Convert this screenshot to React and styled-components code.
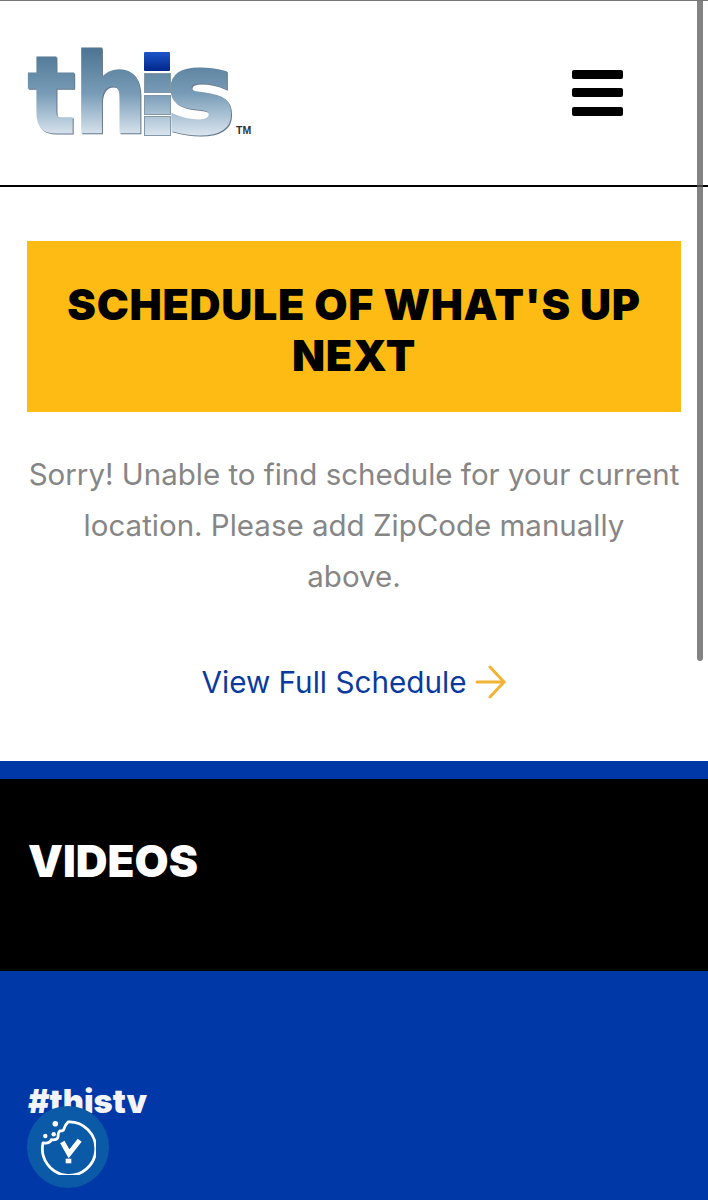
import React from "react";
import styled, { createGlobalStyle } from "styled-components";

const Global = createGlobalStyle`
  html, body { margin: 0; padding: 0; background: #fff; overflow: hidden; }
  * { box-sizing: border-box; }
`;

const Page = styled.div`
  position: relative;
  width: 708px;
  height: 1200px;
  overflow: hidden;
  font-family: Inter, "Liberation Sans", Arial, sans-serif;
  border-top: 1px solid #777;
`;

const Header = styled.header`
  height: 186px;
  border-bottom: 2px solid #000;
  padding: 0 85px 0 27px;
  display: flex;
  align-items: center;
  justify-content: space-between;
`;

const Logo = styled.svg`
  width: 228px;
  height: 90px;
  margin-top: 2px;
  display: block;
  overflow: visible;
`;

const LogoLetters = styled.g`
  filter: drop-shadow(1.5px 1px 0 #66788a);
`;

const Burger = styled.button`
  width: 51px;
  height: 46px;
  padding: 0;
  border: 0;
  background: none;
  display: flex;
  flex-direction: column;
  justify-content: space-between;
  margin-bottom: 1px;
`;

const BurgerBar = styled.span`
  display: block;
  height: 9px;
  border-radius: 2px;
  background: #000;
`;

const Schedule = styled.section`
  padding: 54px 27px 0;
  height: 574px;
  text-align: center;
`;

const Banner = styled.h1`
  margin: 0;
  height: 171px;
  padding-top: 38px;
  background: #fdbb14;
  color: #000;
  font-weight: 900;
  font-size: 43px;
  line-height: 51px;
  letter-spacing: 0.7px;
`;

const Message = styled.p`
  margin: 37px -2px 0;
  color: #868686;
  font-size: 29.5px;
  line-height: 51px;
`;

const FullLink = styled.a`
  margin-top: 62px;
  display: inline-flex;
  align-items: center;
  gap: 8px;
  color: #0a3a9e;
  font-size: 29.7px;
  line-height: 36px;
`;

const BlueBand = styled.div`
  height: 18px;
  background: #0038a8;
`;

const VideosBar = styled.section`
  height: 192px;
  background: #000;
  padding: 54px 28px 0;
`;

const SectionTitle = styled.h2`
  margin: 0;
  color: #fff;
  font-weight: 900;
  font-size: 44px;
  line-height: 56px;
`;

const TagSection = styled.section`
  height: 240px;
  background: #0038a8;
  padding: 108px 28px 0;
`;

const Hashtag = styled.h3`
  margin: 0;
  color: #f2f4f8;
  font-weight: 900;
  font-size: 32.6px;
  line-height: 44px;
`;

const CookieButton = styled.div`
  position: absolute;
  left: 27px;
  top: 1105px;
  width: 82px;
  height: 82px;
  border-radius: 50%;
  background: #0a5aa8;
  display: flex;
  align-items: center;
  justify-content: center;
`;

const Scrollbar = styled.div`
  position: absolute;
  left: 697px;
  top: 0;
  width: 6px;
  height: 660px;
  border-radius: 0 0 3px 3px;
  background: rgba(90, 90, 90, 0.75);
`;

const LogoMark = () => (
  <Logo viewBox="0 0 228 90" aria-label="this">
    <defs>
      <linearGradient id="steel" gradientUnits="userSpaceOnUse" x1="0" y1="2" x2="0" y2="87">
        <stop offset="0" stopColor="#4f7795" />
        <stop offset="0.5" stopColor="#789cb7" />
        <stop offset="1" stopColor="#dbe6ef" />
      </linearGradient>
      <linearGradient id="cap" x1="0" y1="0" x2="0" y2="1">
        <stop offset="0" stopColor="#1d56c8" />
        <stop offset="1" stopColor="#00268a" />
      </linearGradient>
    </defs>
    <LogoLetters fill="url(#steel)" stroke="url(#steel)" strokeWidth="3" fontFamily="DejaVu Sans" fontWeight="700">
      <text x="1" y="83" fontSize="105" textLength="47" lengthAdjust="spacingAndGlyphs">t</text>
      <text x="47" y="83" fontSize="108" textLength="73" lengthAdjust="spacingAndGlyphs">h</text>
      <text x="139" y="83" fontSize="112" textLength="69" lengthAdjust="spacingAndGlyphs">s</text>
    </LogoLetters>
    <g fill="url(#steel)" stroke="#8397a7" strokeWidth="1">
      <rect x="117.5" y="24.5" width="26" height="19" />
      <rect x="117.5" y="46.5" width="26" height="19" />
      <rect x="117.5" y="67.5" width="26" height="19" />
    </g>
    <rect x="117" y="3" width="26" height="19" rx="1" fill="url(#cap)" />
    <text x="209" y="85" fontFamily="Liberation Sans" fontWeight="700" fontSize="10.5" fill="#333">TM</text>
  </Logo>
);

const Arrow = () => (
  <svg width="32" height="34" viewBox="0 0 32 34" fill="none" stroke="#f2b233" strokeWidth="3" strokeLinecap="round" strokeLinejoin="round">
    <path d="M2 17H29" />
    <path d="M15 2L29 17L15 32" />
  </svg>
);

const CookieIcon = () => (
  <svg width="56" height="56" viewBox="0 -2 56 56" fill="none" stroke="#fff" strokeWidth="2.8" strokeLinecap="round" strokeLinejoin="round">
    <path d="M28 1A26.7 26.7 0 1 1 3 22C7 22.5 10.5 21.5 11.3 18.7C14.5 19 17.5 18.5 18 16C18 13.5 18.5 11 19.7 10C22 10 24 9.5 24 7.7C25 5 26 3 28 1Z" />
    <path d="M22.3 21L29 32.7L39.7 19.3" strokeWidth="5" strokeLinecap="butt" strokeLinejoin="miter" />
    <rect x="25.7" y="37.7" width="5.6" height="4.6" fill="#fff" stroke="none" />
    <circle cx="15.3" cy="2.7" r="2.8" fill="#fff" stroke="none" />
    <circle cx="5.3" cy="15" r="2.2" fill="#fff" stroke="none" />
    <circle cx="13.7" cy="13.3" r="2.2" fill="#fff" stroke="none" />
  </svg>
);

export default function App() {
  return (
    <>
      <Global />
      <Page>
        <Header>
          <LogoMark />
          <Burger aria-label="Menu">
            <BurgerBar />
            <BurgerBar />
            <BurgerBar />
          </Burger>
        </Header>
        <Schedule>
          <Banner>SCHEDULE OF WHAT'S UP NEXT</Banner>
          <Message>Sorry! Unable to find schedule for your current location. Please add ZipCode manually<br />above.</Message>
          <FullLink>View Full Schedule <Arrow /></FullLink>
        </Schedule>
        <BlueBand />
        <VideosBar>
          <SectionTitle>VIDEOS</SectionTitle>
        </VideosBar>
        <TagSection>
          <Hashtag>#thistv</Hashtag>
        </TagSection>
        <CookieButton>
          <CookieIcon />
        </CookieButton>
        <Scrollbar />
      </Page>
    </>
  );
}
